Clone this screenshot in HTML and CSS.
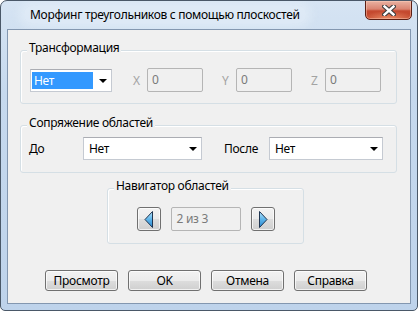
FILE: index.html
```html
<!DOCTYPE html>
<html lang="ru">
<head>
  <meta charset="UTF-8" />
  <title>Морфинг треугольников с помощью плоскостей</title>
  <link rel="stylesheet" href="styles.css">
</head>
<body>

<div class="window">
  <div class="titlebar">
    <span class="title">Морфинг треугольников с помощью плоскостей</span>
    <button class="close-btn" title="Закрыть">
      <svg width="14" height="11" viewBox="0 0 14 11">
        <path d="M2.5 1.5 L11.5 9.5 M11.5 1.5 L2.5 9.5" stroke="#3d3d3d" stroke-width="4.6" stroke-linecap="square"/>
        <path d="M2.5 1.5 L11.5 9.5 M11.5 1.5 L2.5 9.5" stroke="#fff" stroke-width="2.4" stroke-linecap="square"/>
      </svg>
    </button>
  </div>

  <div class="client">

    <!-- TRANSFORM -->
    <div class="group group-transform">
      <span class="group-title">Трансформация</span>
      <div class="row">
        <div class="combo combo-mode">
          <span class="combo-value selected">Нет</span>
          <span class="combo-arrow"></span>
        </div>
        <span class="axis axis-x">X</span>
        <div class="field field-axis">0</div>
        <span class="axis">Y</span>
        <div class="field field-axis">0</div>
        <span class="axis">Z</span>
        <div class="field field-axis">0</div>
      </div>
    </div>

    <!-- JOIN -->
    <div class="group group-join">
      <span class="group-title">Сопряжение областей</span>
      <div class="row">
        <span class="label label-before">До</span>
        <div class="combo combo-before">
          <span class="combo-value">Нет</span>
          <span class="combo-arrow"></span>
        </div>
        <span class="label label-after">После</span>
        <div class="combo combo-after">
          <span class="combo-value">Нет</span>
          <span class="combo-arrow"></span>
        </div>
      </div>
    </div>

    <!-- NAVIGATOR -->
    <div class="group group-nav">
      <span class="group-title">Навигатор областей</span>
      <div class="nav-row">
        <button class="nav-btn">
          <svg width="10" height="17" viewBox="0 0 10 17">
            <defs>
              <linearGradient id="arrL" x1="0" y1="0" x2="0" y2="1">
                <stop offset="0" stop-color="#b9e4fb"/>
                <stop offset=".5" stop-color="#5cb4ea"/>
                <stop offset="1" stop-color="#2a86cf"/>
              </linearGradient>
            </defs>
            <path d="M8.5 .5 L8.5 16.5 L1 8.5 Z" fill="url(#arrL)" stroke="#1f3550" stroke-linejoin="round"/>
          </svg>
        </button>
        <div class="field field-nav">2 из 3</div>
        <button class="nav-btn">
          <svg width="10" height="17" viewBox="0 0 10 17">
            <path d="M1.5 .5 L1.5 16.5 L9 8.5 Z" fill="url(#arrL)" stroke="#1f3550" stroke-linejoin="round"/>
          </svg>
        </button>
      </div>
    </div>

    <!-- BUTTONS -->
    <div class="buttons">
      <button class="btn">Просмотр</button>
      <button class="btn">OK</button>
      <button class="btn">Отмена</button>
      <button class="btn">Справка</button>
    </div>

  </div>
</div>

</body>
</html>
```

FILE: styles.css
```css
*{box-sizing:border-box}

body {
  margin:0;
  font-family:'Noto Sans','Open Sans',sans-serif;
  font-size:12px;
  letter-spacing:-.3px;
  color:#000;
  background:#fff;
}

/* window frame */
.window {
  width:418px;
  height:311px;
  border:1px solid #4a5868;
  border-radius:7px 7px 5px 5px;
  background:linear-gradient(to bottom,#d6e4f3 0%,#c6d9ee 30%,#bed3eb 100%);
  display:flex;
  flex-direction:column;
  overflow:hidden;
}

.titlebar {
  height:28px;
  flex:none;
  display:flex;
  align-items:flex-start;
  padding-left:23px;
}

.title {
  margin-top:5px;
  padding:0 6px;
  line-height:17px;
  white-space:nowrap;
  background:rgba(228,238,249,.6);
  box-shadow:0 0 8px 5px rgba(228,238,249,.6);
  border-radius:8px;
}

.close-btn {
  margin-left:auto;
  margin-right:5px;
  margin-top:-1px;
  width:47px;
  height:20px;
  padding:0;
  border:1px solid #5c1f14;
  border-radius:0 0 5px 5px;
  background:
    radial-gradient(ellipse 60% 45% at 50% 100%,rgba(240,150,110,.9),transparent),
    linear-gradient(to bottom,#e9b2a2 0%,#d98471 45%,#c54a30 55%,#c2452b 100%);
  box-shadow:inset 0 0 0 1px rgba(255,210,190,.45);
  display:flex;
  align-items:center;
  justify-content:center;
}

/* client area */
.client {
  flex:1;
  margin:0 6px 6px;
  border:1px solid #8397b0;
  background:#f0f0f0;
  padding:20px 0 0 12px;
}

.group {
  position:relative;
  width:377px;
  border:1px solid #d5dfe5;
  border-radius:3px;
  box-shadow:inset 1px 1px 0 #fff;
}

.group-title {
  position:absolute;
  top:-11px;
  left:6px;
  padding:0 2px;
  line-height:15px;
  background:#f0f0f0;
}

.group-transform {height:54px;padding:17px 0 0 9px}
.group-join {height:48px;margin-top:21px;padding:11px 0 0 8px}
.group-nav {width:197px;height:56px;margin:15px 0 0 87px;padding:18px 0 0}

.row {display:flex;align-items:center}

/* combo boxes */
.combo {
  height:23px;
  background:#fff;
  border:1px solid #c5cad2;
  border-top-color:#abadb3;
  display:flex;
  align-items:center;
}

.combo-value {padding-left:5px;line-height:17px}
.combo-value.selected {
  margin-left:1px;
  width:61px;
  padding-left:2px;
  background:#3399ff;
  color:#fff;
}

.combo-arrow {
  margin-left:auto;
  width:17px;
  height:100%;
  display:flex;
  align-items:center;
  justify-content:center;
}

.combo-arrow::after {
  content:'';
  border-left:4px solid transparent;
  border-right:4px solid transparent;
  border-top:4px solid #000;
  margin-top:1px;
}

.combo-mode {width:82px}
.combo-before {width:119px}
.combo-after {width:114px}

.label-before {width:54px}
.label-after {width:45px;margin-left:22px}

/* disabled fields */
.axis {
  color:#a3a3a3;
  width:14px;
  margin-left:19px;
}
.axis-x {margin-left:21px}

.field {
  height:24px;
  border:1px solid #b5b5b5;
  border-radius:2px;
  background:#f0f0f0;
  color:#7a7a7a;
  padding:2px 0 0 4px;
  line-height:17px;
}

.field-axis {width:56px}

/* navigator */
.nav-row {
  display:flex;
  justify-content:center;
  align-items:center;
  gap:10px;
}

.field-nav {width:70px;padding-left:5px}

.nav-btn {
  width:24px;
  height:24px;
  padding:0;
  border:1px solid #707070;
  border-radius:3px;
  background:linear-gradient(to bottom,#f2f2f2 0%,#ebebeb 50%,#dddddd 51%,#cfcfcf 100%);
  box-shadow:inset 0 0 0 1px rgba(255,255,255,.7);
  display:flex;
  align-items:center;
  justify-content:center;
}

/* dialog buttons */
.buttons {
  display:flex;
  gap:10px;
  margin:26px 0 0 25px;
}

.btn {
  width:73px;
  height:21px;
  padding:0;
  font-family:inherit;
  font-size:12px;
  letter-spacing:inherit;
  color:#000;
  border:1px solid #707070;
  border-radius:3px;
  background:linear-gradient(to bottom,#f2f2f2 0%,#ebebeb 50%,#dddddd 51%,#cfcfcf 100%);
  box-shadow:inset 0 0 0 1px rgba(255,255,255,.7);
}
```
